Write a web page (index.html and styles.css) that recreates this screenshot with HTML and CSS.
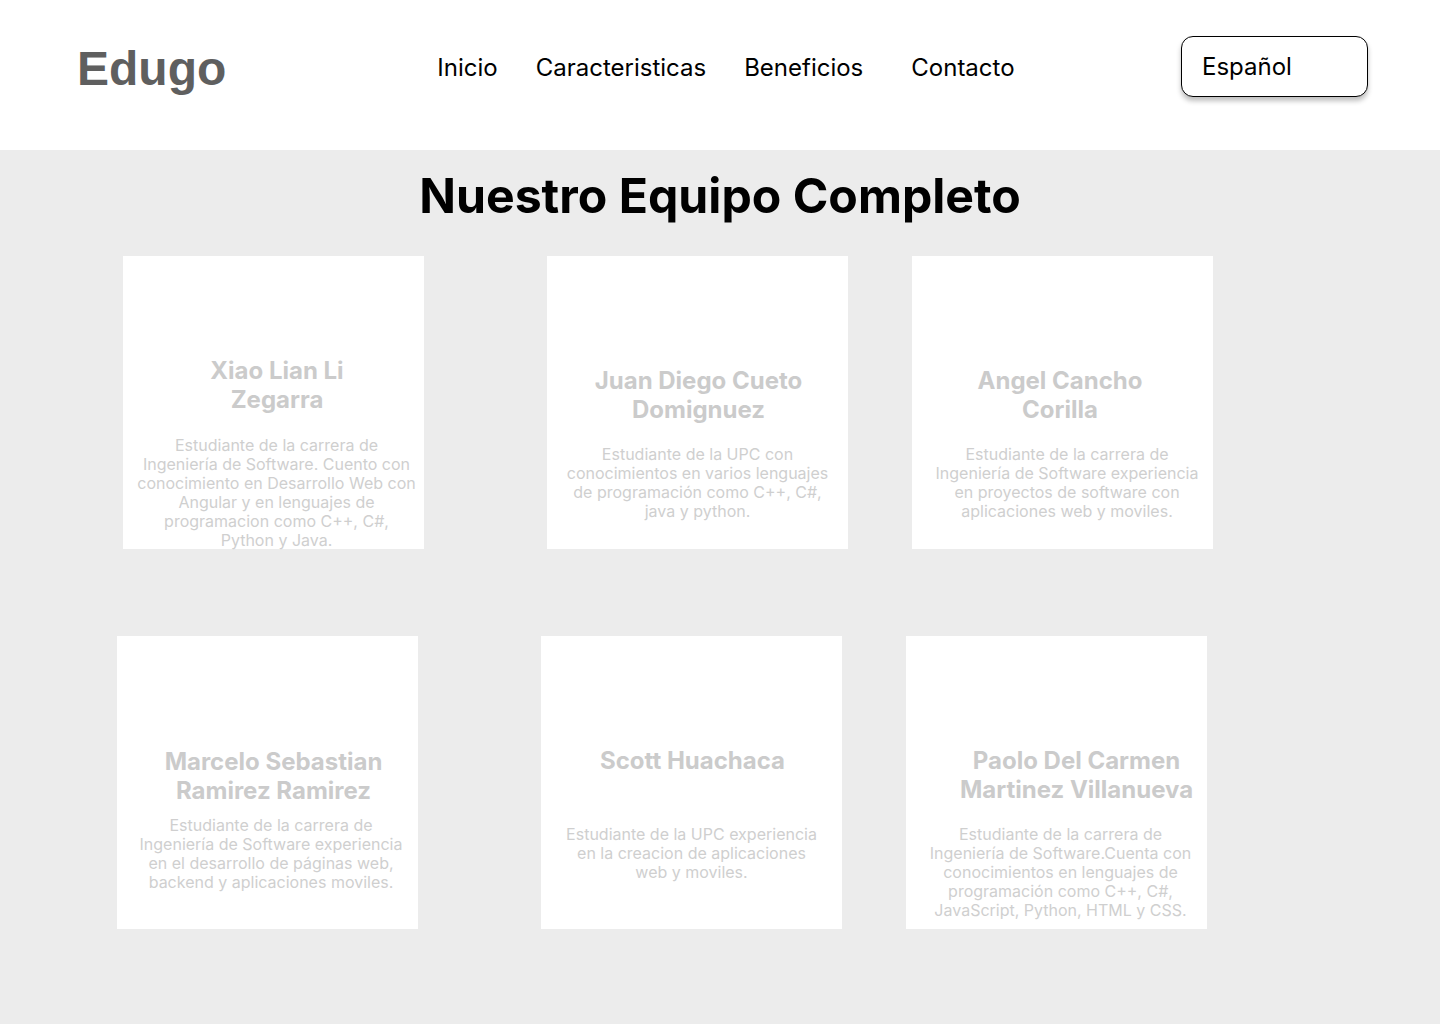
FILE: index.html
```html
<!DOCTYPE html>
<html lang="es">
<head>
<meta charset="utf-8">
<title>Edugo - Nuestro Equipo</title>
<link rel="stylesheet" href="styles.css">
</head>
<body>
<header class="topbar">
  <div class="logo">Edugo</div>
  <nav class="nav">
    <a class="nav-link" href="#">Inicio</a>
    <a class="nav-link" href="#">Caracteristicas</a>
    <a class="nav-link" href="#">Beneficios</a>
    <a class="nav-link nav-link-last" href="#">Contacto</a>
  </nav>
  <button class="lang" type="button">Español</button>
</header>
<main class="team">
  <h1 class="team-title">Nuestro Equipo Completo</h1>
  <div class="team-row team-row-1">
    <article class="card card-1">
      <h3 class="card-name">Xiao Lian Li<br>Zegarra</h3>
      <p class="card-desc">Estudiante de la carrera de<br>Ingeniería de Software. Cuento con<br>conocimiento en Desarrollo Web con<br>Angular y en lenguajes de<br>programacion como C++, C#,<br>Python y Java.</p>
    </article>
    <article class="card card-2">
      <h3 class="card-name">Juan Diego Cueto<br>Domignuez</h3>
      <p class="card-desc">Estudiante de la UPC con<br>conocimientos en varios lenguajes<br>de programación como C++, C#,<br>java y python.</p>
    </article>
    <article class="card card-3">
      <h3 class="card-name">Angel Cancho<br>Corilla</h3>
      <p class="card-desc">Estudiante de la carrera de<br>Ingeniería de Software experiencia<br>en proyectos de software con<br>aplicaciones web y moviles.</p>
    </article>
  </div>
  <div class="team-row team-row-2">
    <article class="card card-4">
      <h3 class="card-name">Marcelo Sebastian<br>Ramirez Ramirez</h3>
      <p class="card-desc">Estudiante de la carrera de<br>Ingeniería de Software experiencia<br>en el desarrollo de páginas web,<br>backend y aplicaciones moviles.</p>
    </article>
    <article class="card card-5">
      <h3 class="card-name">Scott Huachaca</h3>
      <p class="card-desc">Estudiante de la UPC experiencia<br>en la creacion de aplicaciones<br>web y moviles.</p>
    </article>
    <article class="card card-6">
      <h3 class="card-name">Paolo Del Carmen<br>Martinez Villanueva</h3>
      <p class="card-desc">Estudiante de la carrera de<br>Ingeniería de Software.Cuenta con<br>conocimientos en lenguajes de<br>programación como C++, C#,<br>JavaScript, Python, HTML y CSS.</p>
    </article>
  </div>
</main>
</body>
</html>
```

FILE: styles.css
```css
* {
  box-sizing: border-box;
}

html, body {
  margin: 0;
  padding: 0;
}

body {
  width: 1440px;
  min-height: 1024px;
  background: #ececec;
  font-family: Inter, "Noto Sans", sans-serif;
  color: #000;
}

/* Header */
.topbar {
  height: 150px;
  background: #ffffff;
  display: flex;
  align-items: center;
  padding: 36px 72px 54px 77px;
}

.logo {
  font-family: "Liberation Sans", Arial, sans-serif;
  font-weight: 700;
  font-size: 48px;
  color: #5f5f5f;
  line-height: 60px;
  margin-top: 5px;
}

.nav {
  display: flex;
  align-items: center;
  margin-left: 211px;
  margin-top: 4px;
  gap: 38px;
}

.nav-link {
  font-size: 24px;
  color: #000;
  text-decoration: none;
  line-height: 30px;
}

.nav-link-last {
  margin-left: 10px;
}

.lang {
  margin-left: auto;
  width: 187px;
  height: 61px;
  background: #fff;
  border: 1px solid #000;
  border-radius: 12px;
  box-shadow: 0 4px 5px rgba(0, 0, 0, 0.25);
  font-family: Inter, "Noto Sans", sans-serif;
  font-size: 24px;
  color: #000;
  text-align: left;
  padding: 0 0 0 20px;
  cursor: pointer;
}

/* Team section */
.team {
  padding-top: 17px;
  padding-bottom: 40px;
}

.team-title {
  margin: 0;
  text-align: center;
  font-size: 48.2px;
  font-weight: 700;
  line-height: 58px;
  color: #000;
}

.team-row {
  display: flex;
  margin-top: 31px;
}

.team-row-1 {
  padding-left: 123px;
}

.team-row-2 {
  padding-left: 117px;
  margin-top: 87px;
}

.card {
  width: 301px;
  height: 293px;
  flex: none;
  background: #ffffff;
  text-align: center;
  padding-top: 110px;
}

.card:nth-child(2) {
  margin-left: 123px;
}

.card:nth-child(3) {
  margin-left: 64px;
}

.card-name {
  margin: 0;
  font-size: 24px;
  font-weight: 700;
  line-height: 29px;
  color: #cbcbcb;
  white-space: nowrap;
}

.card-desc {
  margin: 21px 0 0;
  font-size: 16px;
  font-weight: 400;
  line-height: 19px;
  color: #cfcfcf;
  white-space: nowrap;
}

.card-1 {
  padding-top: 100px;
}
.card-1 .card-name { padding-left: 7px; }
.card-1 .card-desc { margin-top: 22px; padding-left: 6px; }

.card-2 .card-name { padding-left: 2px; }

.card-3 .card-name { padding-right: 5px; }
.card-3 .card-desc { padding-left: 9px; }

.card-4 {
  padding-top: 111px;
}
.card-4 .card-name { padding-left: 12px; }
.card-4 .card-desc { margin-top: 11px; padding-left: 7px; }

.card-5 .card-name { min-height: 58px; padding-left: 2px; }

.card-6 .card-name { padding-left: 40px; }
.card-6 .card-desc { margin-top: 21px; padding-left: 8px; }
```
